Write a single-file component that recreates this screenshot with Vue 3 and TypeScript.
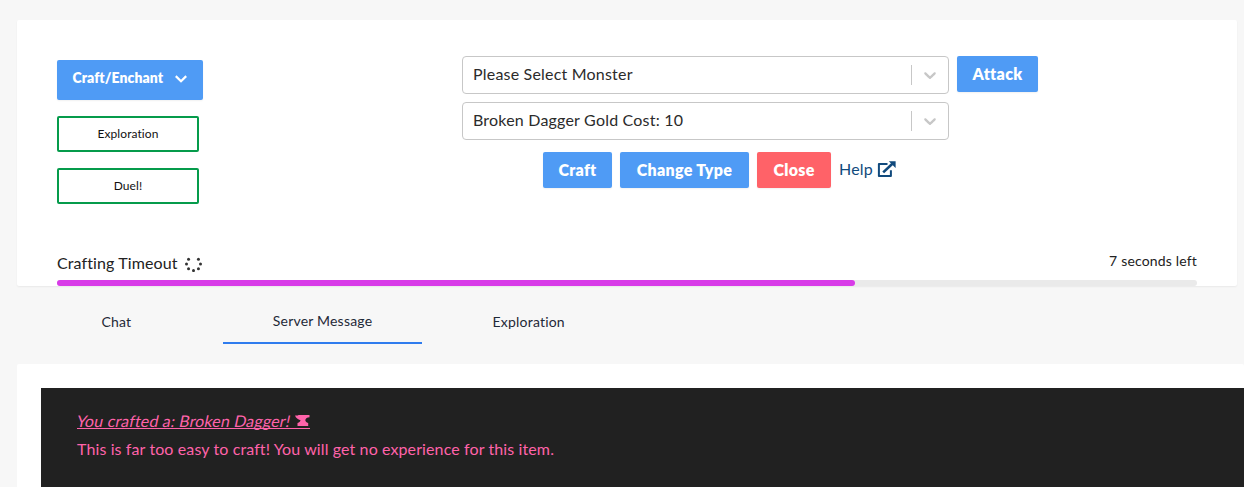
<script setup lang="ts">
const selects: { label: string; cls: string }[] = [
  { label: 'Please Select Monster', cls: 'monster' },
  { label: 'Broken Dagger Gold Cost: 10', cls: 'item' },
]
const tabs: { label: string; cls: string }[] = [
  { label: 'Chat', cls: 'chat' },
  { label: 'Server Message', cls: 'active' },
  { label: 'Exploration', cls: 'explore' },
]
const dots = [0, 1, 2, 3, 4, 5, 6].map((i) => {
  const a = ((i * 45 - 45) * Math.PI) / 180
  return { x: 8.5 + 7 * Math.cos(a), y: 8 + 6.6 * Math.sin(a) }
})
const progress = 70
</script>

<template>
  <div class="page">
    <section class="card">
      <div class="controls">
        <div class="side">
          <button class="dropdown">
            <span>Craft/Enchant</span>
            <svg width="12" height="8" viewBox="0 0 12 8"><path d="M.8 1.1 6 6.2 11.2 1.1" fill="none" stroke="#fff" stroke-width="2.2" /></svg>
          </button>
          <button class="outline explore-btn"><span>Exploration</span></button>
          <button class="outline duel"><span>Duel!</span></button>
        </div>
        <div class="center">
          <div v-for="s in selects" :key="s.label" class="select">
            <span :class="s.cls">{{ s.label }}</span>
            <i class="separator"></i>
            <svg width="20" height="20" viewBox="0 0 20 20"><path fill="#c7c7c7" d="M4.516 7.548c0.436-0.446 1.043-0.481 1.576 0l3.908 3.747 3.908-3.747c0.533-0.481 1.141-0.446 1.574 0 0.436 0.445 0.408 1.197 0 1.615-0.406 0.418-4.695 4.502-4.695 4.502-0.217 0.223-0.502 0.335-0.787 0.335s-0.57-0.112-0.789-0.335c0 0-4.287-4.084-4.695-4.502s-0.436-1.17 0-1.615z" /></svg>
          </div>
          <div class="actions">
            <button class="btn craft"><span>Craft</span></button>
            <button class="btn change"><span>Change Type</span></button>
            <button class="btn close"><span>Close</span></button>
            <a class="help"><span>Help</span>
              <svg width="19" height="17" viewBox="0 0 19 17"><path d="M10.5 3H1.9v12.1h12V9.2" fill="none" stroke="#114a7d" stroke-width="2" stroke-linejoin="round" /><path d="M6.2 11.4 15.4 2.7" stroke="#114a7d" stroke-width="2.6" /><path d="M11.8.3h6.8v6.6z" fill="#114a7d" /></svg>
            </a>
          </div>
        </div>
        <button class="btn attack"><span>Attack</span></button>
      </div>
      <div class="timer">
        <div class="timer-head">
          <span class="timer-title">Crafting Timeout</span>
          <svg class="spinner" width="17" height="16" viewBox="0 0 17 16"><circle v-for="(d, i) in dots" :key="i" :cx="d.x" :cy="d.y" r="1.5" fill="#333" /></svg>
          <span class="left">7 seconds left</span>
        </div>
        <div class="track"><div class="bar" :style="{ width: progress + '%' }"></div></div>
      </div>
    </section>
    <nav class="tabs">
      <div v-for="t in tabs" :key="t.label" class="tab" :class="t.cls"><span>{{ t.label }}</span></div>
    </nav>
    <section class="messages">
      <div class="console">
        <div class="line"><a class="link"><em>You crafted a: Broken Dagger!</em><svg width="15" height="12" viewBox="0 0 15 12"><path d="M0 .6h3.2V0h11.3v2.2C12.2 2.4 10.6 3.4 10.3 5c.1 1.200.9 2.300 2.900 3v2.900H2.500V8c2-.7 2.900-1.600 3-2.800C3.100 4.600.8 3.300 0 .6z" fill="#ff63aa" /></svg></a></div>
        <div class="line"><span class="easy">This is far too easy to craft! You will get no experience for this item.</span></div>
      </div>
    </section>
  </div>
</template>

<style>
body { background: #f7f7f7; overflow: hidden; }
</style>

<style scoped>
.page { width: 1244px; height: 487px; overflow: hidden; padding: 20px 0 0 17px; box-sizing: border-box; background: #f7f7f7; font: 16px/24px Lato, "Open Sans", sans-serif; letter-spacing: .16px; color: #222; font-variant-ligatures: none; }
.page * { box-sizing: border-box; }
button { font-family: inherit; border: 0; margin: 0; padding: 0; white-space: nowrap; }
span, em { white-space: nowrap; }
svg { display: block; flex: none; }
.card { width: 1220px; height: 266px; background: #fff; border-radius: 2px; box-shadow: 0 1px 2px rgba(0, 0, 0, .06); padding: 36px 40px 0; display: flex; flex-direction: column; justify-content: space-between; }
.controls { display: flex; align-items: flex-start; }
.side { width: 405px; padding-top: 4px; display: flex; flex-direction: column; align-items: flex-start; gap: 16px; }
.dropdown { width: 146px; height: 40px; border-radius: 2px; background: #4f9bf5; color: #fff; display: flex; align-items: center; justify-content: space-between; padding: 0 16px 5px 15.5px; font-size: 14px; font-weight: 800; letter-spacing: .05px; box-shadow: 0 1px 2px rgba(0, 0, 0, .06); }
.dropdown svg { margin-top: 3px; }
.outline { width: 142px; height: 36px; border: 2px solid #059b4b; border-radius: 2px; background: #fff; font-size: 12px; line-height: 18px; letter-spacing: .08px; color: #111; }
.center { width: 487px; display: flex; flex-direction: column; gap: 8px; }
.select { height: 38px; border: 1px solid #c7c7c7; border-radius: 4px; display: flex; align-items: center; padding: 0 8px 0 10px; color: #2b2b2b; letter-spacing: .2px; }
.select span { padding-bottom: 2px; }
.separator { margin-left: auto; margin-right: 8px; width: 1px; height: 20px; background: #c7c7c7; }
.actions { margin: 4px 0 0 81px; display: flex; gap: 8px; }
.btn { height: 36px; border-radius: 2px; background: #4f9bf5; color: #fff; font-size: 16px; line-height: 24px; font-weight: 800; letter-spacing: .3px; box-shadow: 0 1px 2px rgba(0, 0, 0, .06); }
.craft { width: 69px; }
.change { width: 129px; }
.close { width: 74px; background: #ff6268; }
.attack { width: 81px; margin-left: 8px; }
.help { color: #114a7d; display: flex; align-items: center; gap: 4px; }
.help span { padding-bottom: 2px; }
.help svg { margin-bottom: 2px; }
.timer-head { display: flex; align-items: center; height: 24px; margin-bottom: 4px; }
.timer-title { padding-bottom: 2px; letter-spacing: .12px; }
.spinner { margin: 0 0 1px 7px; }
.left { margin-left: auto; font-size: 14px; padding-bottom: 6px; letter-spacing: .17px; }
.track { height: 6px; border-radius: 3px; background: #eaeaea; }
.bar { height: 6px; border-radius: 3px; background: #d83be8; }
.tabs { height: 58px; display: flex; gap: 7.5px; }
.tab { width: 198.7px; height: 58px; padding-top: 24px; text-align: center; color: #1f2937; font-size: 14px; letter-spacing: .2px; }
.active { border-bottom: 2px solid #2f7cee; padding-top: 23px; }
.messages { margin-top: 20px; height: 200px; background: #fff; border-radius: 2px; padding: 24px 0 0 24px; }
.console { height: 200px; background: #212121; padding: 19px 36px; color: #ff63aa; letter-spacing: .11px; }
.line { height: 28px; line-height: 28px; }
.link { display: inline-flex; align-items: center; height: 28px; position: relative; letter-spacing: .15px; }
.link em { font-style: normal; transform: skewX(-12deg); }
.link::after { content: ""; position: absolute; left: 0; right: 0; bottom: 6px; height: 1px; background: currentColor; }
.link svg { margin: 0 0 1px 4px; }
</style>
